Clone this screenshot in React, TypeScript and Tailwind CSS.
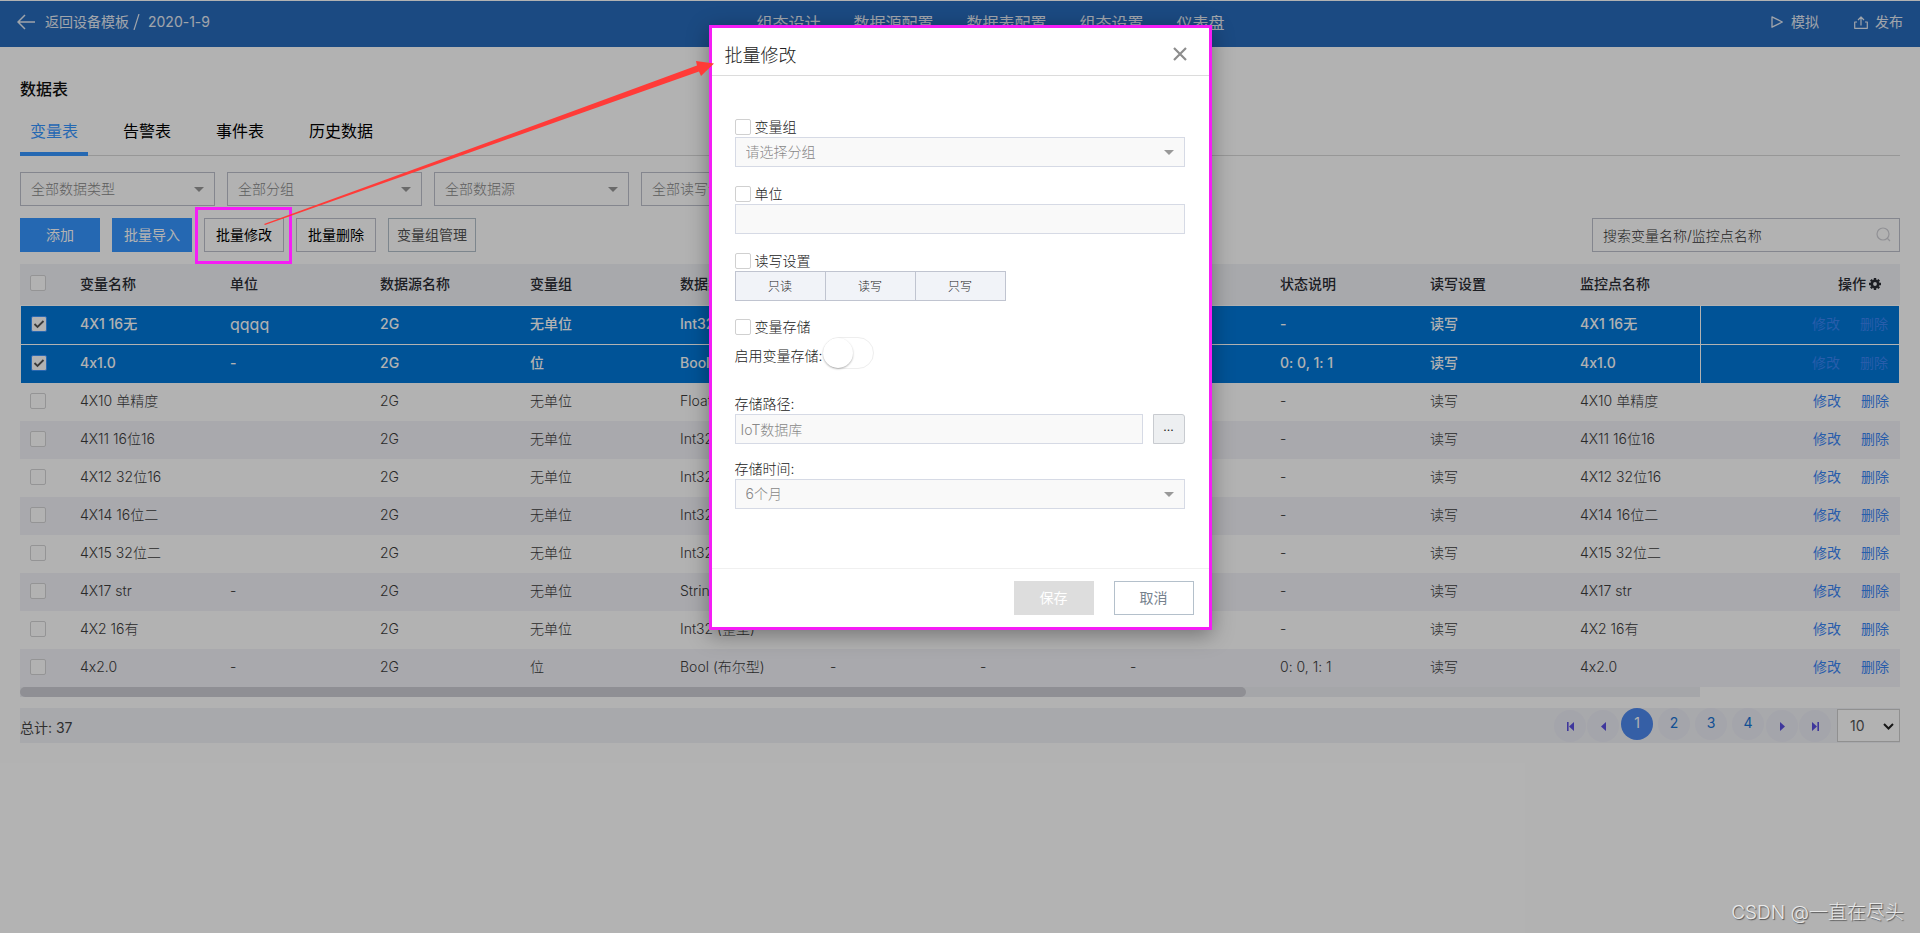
import React, { useState } from 'react';

interface Variable {
    name: string;
    unit: string;
    group: string;
    type: string;
    state: string;
}

const variables: Variable[] = [
    { name: '4X1 16无', unit: 'qqqq', group: '无单位', type: 'Int32 (整型)', state: '-' },
    { name: '4x1.0', unit: '-', group: '位', type: 'Bool (布尔型)', state: '0: 0, 1: 1' },
    { name: '4X10 单精度', unit: '', group: '无单位', type: 'Float (单精度)', state: '-' },
    { name: '4X11 16位16', unit: '', group: '无单位', type: 'Int32 (整型)', state: '-' },
    { name: '4X12 32位16', unit: '', group: '无单位', type: 'Int32 (整型)', state: '-' },
    { name: '4X14 16位二', unit: '', group: '无单位', type: 'Int32 (整型)', state: '-' },
    { name: '4X15 32位二', unit: '', group: '无单位', type: 'Int32 (整型)', state: '-' },
    { name: '4X17 str', unit: '-', group: '无单位', type: 'String (字符串)', state: '-' },
    { name: '4X2 16有', unit: '', group: '无单位', type: 'Int32 (整型)', state: '-' },
    { name: '4x2.0', unit: '-', group: '位', type: 'Bool (布尔型)', state: '0: 0, 1: 1' },
];

const navItems = ['组态设计', '数据源配置', '数据表配置', '组态设置', '仪表盘'];
const tabs = ['变量表', '告警表', '事件表', '历史数据'];
const filters = ['全部数据类型', '全部分组', '全部数据源', '全部读写设置'];
const columns = ['变量名称', '单位', '数据源名称', '变量组', '数据类型', '最小值', '最大值', '小数位', '状态说明', '读写设置'];

const Caret = ({ className }: { className: string }) => (
    <svg className={`pointer-events-none absolute top-1/2 -mt-0.5 h-[5px] w-[10px] ${className}`} viewBox="0 0 10 5">
        <path d="M0 0h10L5 5z" fill="currentColor" />
    </svg>
);

const Tick = ({ checked, onChange, label }: { checked: boolean; onChange: () => void; label: string }) => (
    <span className="relative block h-4 w-4">
        <input
            type="checkbox"
            aria-label={label}
            checked={checked}
            onChange={onChange}
            className="block h-4 w-4 appearance-none rounded-[2px] border border-[#d4d4d6] bg-white checked:border-[#3a96ff]"
        />
        {checked && (
            <svg className="pointer-events-none absolute inset-0 h-4 w-4" viewBox="0 0 16 16" fill="none" stroke="#555" strokeWidth="1.8">
                <path d="M3.5 8l3 3 6-6" />
            </svg>
        )}
    </span>
);

const Header = () => (
    <header className="mt-px flex h-[46px] items-center justify-between bg-[#286aba] pl-[17px] pr-[17px] pb-1 text-sm text-[#e6ecf5]">
        <div className="flex items-center">
            <a href="#back" className="flex items-center">
                <svg className="mr-[10px] h-4 w-[18px]" viewBox="0 0 18 16" fill="none" stroke="currentColor" strokeWidth="1.5">
                    <path d="M8 1L1 8l7 7M1 8h17" />
                </svg>
                返回设备模板
            </a>
            <svg className="ml-1 mr-2 h-4 w-[7px]" viewBox="0 0 7 16" stroke="currentColor" strokeWidth="1.2">
                <path d="M6 0L1 16" />
            </svg>
            <span>2020-1-9</span>
        </div>
        <nav className="flex gap-[33px] pt-0.5 text-base">
            {navItems.map((item) => (
                <a key={item} href="#nav">{item}</a>
            ))}
        </nav>
        <div className="flex gap-[35px]">
            <button className="flex items-center gap-2">
                <svg className="h-3 w-3" viewBox="0 0 12 12" fill="none" stroke="currentColor" strokeWidth="1.3" strokeLinejoin="round">
                    <path d="M1 .8L11.3 6 1 11.2z" />
                </svg>
                模拟
            </button>
            <button className="flex items-center gap-[7px]">
                <svg className="h-[13px] w-[14px]" viewBox="0 0 14 13" fill="none" stroke="currentColor" strokeWidth="1.2" strokeLinejoin="round">
                    <path d="M3 6H.7v6.3h12.6V6H11M7 9.5V1M4 4l3-3 3 3" />
                </svg>
                发布
            </button>
        </div>
    </header>
);

const VariableTable = () => {
    const [selected, setSelected] = useState<number[]>([0, 1]);

    const toggle = (index: number) => {
        setSelected(selected.includes(index) ? selected.filter((i) => i !== index) : [...selected, index]);
    };

    return (
        <>
            <table className="mt-3 w-full table-fixed border-separate border-spacing-0 text-left text-sm">
                <colgroup>
                    <col className="w-[50px]" />
                    {columns.map((c) => (
                        <col key={c} className="w-[150px]" />
                    ))}
                    <col />
                    <col className="w-[200px]" />
                </colgroup>
                <thead>
                    <tr className="h-[41px] bg-[#f1f2f6] text-[#2a2c33]">
                        <th className="pl-[10px] pb-[3px]">
                            <Tick label="全选" checked={false} onChange={() => setSelected([])} />
                        </th>
                        {columns.map((c) => (
                            <th key={c} className="pl-[10px] pb-0.5 font-medium">{c}</th>
                        ))}
                        <th className="pl-[10px] pb-0.5 font-medium">监控点名称</th>
                        <th className="pr-[19px] pb-0.5 font-medium">
                            <span className="flex items-center justify-end gap-[3px]">
                                操作
                                <svg className="h-3 w-3" viewBox="0 0 12 12">
                                    <circle cx="6" cy="6" r="3.2" fill="none" stroke="currentColor" strokeWidth="2.6" />
                                    <path
                                        d="M6 0v2M6 10v2M0 6h2M10 6h2M1.8 1.8l1.4 1.4M8.8 8.8l1.4 1.4M1.8 10.2l1.4-1.4M8.8 3.2l1.4-1.4"
                                        stroke="currentColor"
                                        strokeWidth="2.4"
                                    />
                                </svg>
                            </span>
                        </th>
                    </tr>
                </thead>
                <tbody>
                    {variables.map((v, index) => {
                        const active = selected.includes(index);
                        const cell = active
                            ? 'whitespace-nowrap border-t border-white bg-[#0077d9] pl-[10px] pb-0.5 font-medium text-white'
                            : `whitespace-nowrap pl-[10px] pb-0.5 font-light text-[#3c3c3c] ${index % 2 ? 'bg-[#f2f2f8]' : ''}`;
                        return (
                            <tr key={v.name} className={active ? 'h-[39px]' : 'h-[38px]'}>
                                <td className={`${cell} ${active ? 'border-l' : ''}`}>
                                    <Tick label={v.name} checked={active} onChange={() => toggle(index)} />
                                </td>
                                <td className={cell}>{v.name}</td>
                                <td className={cell}>
                                    <span className={v.unit === 'qqqq' ? 'text-base leading-5 font-normal' : ''}>{v.unit}</span>
                                </td>
                                <td className={cell}>2G</td>
                                <td className={cell}>{v.group}</td>
                                <td className={cell}>{v.type}</td>
                                <td className={cell}>-</td>
                                <td className={cell}>-</td>
                                <td className={cell}>-</td>
                                <td className={cell}>{v.state}</td>
                                <td className={cell}>读写</td>
                                <td className={cell}>{v.name}</td>
                                <td className={`${cell} pr-[11px] text-right ${active ? 'border-x' : ''}`}>
                                    <span className="inline-flex gap-5 font-normal text-[#3a86f5]">
                                        <a href="#edit">修改</a>
                                        <a href="#delete">删除</a>
                                    </span>
                                </td>
                            </tr>
                        );
                    })}
                </tbody>
            </table>
            <div className="mr-[200px] h-[10px] bg-[#edeef3]">
                <div className="h-full w-[73%] rounded-full bg-[#cdcdd4]" />
            </div>
        </>
    );
};

const PageArrow = ({ d, label }: { d: string; label: string }) => (
    <button aria-label={label} className="flex h-8 w-8 items-center justify-center rounded-full bg-[#ebecf5] text-[#5b4fe0]">
        <svg className="h-[9px] w-[9px]" viewBox="0 0 9 9" fill="currentColor">
            <path d={d} />
        </svg>
    </button>
);

const Pagination = () => {
    const [page, setPage] = useState(1);

    return (
        <div className="mt-[11px] flex h-[35px] items-center justify-between bg-[#f1f2f6] text-sm">
            <span className="pt-1 text-[#444]">总计: 37</span>
            <div className="flex h-full items-start">
                <div className="flex gap-px pt-0.5">
                    <PageArrow label="首页" d="M1 0h1.6v9H1zM8 0v9L3 4.5z" />
                    <PageArrow label="上一页" d="M7 0v9L2 4.5z" />
                </div>
                <div className="mx-0.5 flex gap-[5px]">
                    {[1, 2, 3, 4].map((n) => (
                        <button
                            key={n}
                            onClick={() => setPage(n)}
                            className={`h-8 w-8 rounded-full pb-0.5 ${n === page ? 'bg-[#4d88ee] text-white' : 'bg-[#ebecf5] text-[#1873d3]'}`}
                        >
                            {n}
                        </button>
                    ))}
                </div>
                <div className="flex gap-px pt-0.5">
                    <PageArrow label="下一页" d="M2 0v9l5-4.5z" />
                    <PageArrow label="末页" d="M8 0H6.4v9H8zM1 0v9l5-4.5z" />
                </div>
                <div className="relative ml-[6px] mt-px">
                    <select aria-label="每页条数" className="block h-[33px] w-[63px] appearance-none border border-[#cfcfcf] bg-white pl-3 text-[#555]">
                        <option>10</option>
                    </select>
                    <svg className="pointer-events-none absolute right-[6px] top-[14px] h-[7px] w-[11px]" viewBox="0 0 11 7" fill="none" stroke="#222" strokeWidth="2">
                        <path d="M1 1l4.5 4.5L10 1" />
                    </svg>
                </div>
            </div>
        </div>
    );
};

const field = 'block h-[30px] w-full appearance-none rounded-none border border-[#d6dae5] bg-[#f9f9f9] text-[#888]';

const CheckLabel = ({ text }: { text: string }) => (
    <label className="flex h-[18px] items-start gap-1 leading-4">
        <input type="checkbox" className="h-4 w-4 appearance-none rounded-[2px] border border-[#d0d0d0] bg-white" />
        {text}
    </label>
);

const BatchEditDialog = () => (
    <div
        role="dialog"
        aria-label="批量修改"
        className="w-[503px] border-[3px] border-[#f51df5] bg-white text-sm font-light text-[#222] shadow-[0_5px_20px_rgba(0,0,0,0.35)]"
    >
        <div className="flex h-12 items-center justify-between border-b border-[#dcdcdc] pl-[13px] pr-[22px] pt-1">
            <h2 className="pt-1 text-lg">批量修改</h2>
            <button aria-label="关闭" className="text-[#8d8d8d]">
                <svg className="h-[14px] w-[14px]" viewBox="0 0 14 14" fill="none" stroke="currentColor" strokeWidth="2.2">
                    <path d="M1 1l12 12M13 1L1 13" />
                </svg>
            </button>
        </div>

        <div className="pr-6 pt-[43px] pb-[59px] pl-[23px]">
            <CheckLabel text="变量组" />
            <div className="relative">
                <select aria-label="变量组" className={`${field} pl-[10px]`}>
                    <option>请选择分组</option>
                </select>
                <Caret className="right-[11px] text-[#999]" />
            </div>

            <div className="mt-[19px]">
                <CheckLabel text="单位" />
                <input type="text" aria-label="单位" className={`${field} pl-[5px]`} />
            </div>

            <div className="mt-[19px]">
                <CheckLabel text="读写设置" />
                <div className="flex w-[271px] divide-x divide-[#c0c4d0] border border-[#c0c4d0] bg-[#f1f3f8] text-xs">
                    {['只读', '读写', '只写'].map((mode) => (
                        <button key={mode} className="h-7 flex-1 pt-px">{mode}</button>
                    ))}
                </div>
            </div>

            <div className="mt-[18px]">
                <CheckLabel text="变量存储" />
                <label className="flex h-8 items-center gap-px">
                    <span className="pt-1.5">启用变量存储:</span>
                    <span className="relative">
                        <input type="checkbox" className="block h-8 w-[51px] appearance-none rounded-full border border-[#eee] bg-white" />
                        <span className="absolute left-0 top-px h-[30px] w-[30px] rounded-full bg-white shadow-[0_1px_2px_rgba(0,0,0,0.3)]" />
                    </span>
                </label>
            </div>

            <div className="mt-[25px]">
                <label htmlFor="path" className="block leading-5">存储路径:</label>
                <div className="flex gap-[10px]">
                    <input id="path" type="text" defaultValue="IoT数据库" className={`${field} pl-[5px]`} />
                    <button className="h-[30px] w-8 shrink-0 rounded-r-[3px] border border-[#c8cbd0] bg-[#edeff1] pb-1 text-xs leading-4 font-normal">...</button>
                </div>
            </div>

            <div className="mt-[15px]">
                <label htmlFor="time" className="block leading-5">存储时间:</label>
                <div className="relative">
                    <select id="time" className={`${field} pl-[10px]`}>
                        <option>6个月</option>
                    </select>
                    <Caret className="right-[11px] text-[#999]" />
                </div>
            </div>
        </div>

        <div className="flex justify-end gap-5 border-t border-[#f0f0f0] px-[15px] py-3">
            <button disabled className="h-[34px] w-20 bg-[#ddd] font-normal text-white">保存</button>
            <button className="h-[34px] w-20 border border-[#b4c0cb] font-normal text-[#75818d]">取消</button>
        </div>
    </div>
);

const App: React.FC = () => {
    const [tab, setTab] = useState('变量表');

    return (
        <div className="relative min-h-screen overflow-hidden bg-white font-['Inter','Noto_Sans_CJK_SC',sans-serif] [font-feature-settings:'calt'_0]">
            <Header />
            <main className="px-5 pt-[30px]">
                <h1 className="text-base leading-6 font-medium text-[#111]">数据表</h1>

                <div className="mt-[14px] flex h-[41px] gap-[25px] border-b border-[#d8d8d8] text-base">
                    {tabs.map((t) => (
                        <button
                            key={t}
                            onClick={() => setTab(t)}
                            className={`h-[41px] border-b-4 px-[10px] pb-1.5 ${t === tab ? 'border-[#3595ff] text-[#3595ff]' : 'border-transparent text-black'}`}
                        >
                            {t}
                        </button>
                    ))}
                </div>

                <div className="mt-4 flex gap-3">
                    {filters.map((f) => (
                        <div key={f} className="relative w-[195px]">
                            <select aria-label={f} className="block h-[34px] w-full appearance-none border border-[#bec0cc] bg-white pl-[10px] text-sm font-light text-[#888]">
                                <option>{f}</option>
                            </select>
                            <Caret className="right-[11px] text-[#999]" />
                        </div>
                    ))}
                </div>

                <div className="mt-3 flex items-center justify-between text-sm">
                    <div className="flex gap-3">
                        <button className="h-[34px] w-20 bg-[#3595ff] text-white">添加</button>
                        <button className="h-[34px] w-20 bg-[#3595ff] text-white">批量导入</button>
                        <button className="h-[34px] w-20 border border-[#bec0cc] text-black">批量修改</button>
                        <button className="h-[34px] w-20 border border-[#bec0cc] text-black">批量删除</button>
                        <button className="h-[34px] w-[88px] border border-[#b4c0cb] text-[#555]">变量组管理</button>
                    </div>
                    <div className="relative w-[308px]">
                        <input
                            type="text"
                            aria-label="搜索"
                            placeholder="搜索变量名称/监控点名称"
                            className="block h-[34px] w-full border border-[#bec0cc] bg-white pl-[10px] font-light placeholder:text-[#333]"
                        />
                        <svg className="absolute right-[9px] top-[9px] h-[15px] w-[15px]" viewBox="0 0 15 15" fill="none" stroke="#d0d0d6" strokeWidth="1.2">
                            <circle cx="7" cy="7" r="6" />
                            <path d="M11 11l3 3" />
                        </svg>
                    </div>
                </div>

                <VariableTable />
                <Pagination />
            </main>

            {/* Dialog layer */}
            <div className="absolute inset-0 flex items-start justify-center bg-black/30 pt-[25px]">
                <BatchEditDialog />
            </div>

            {/* Annotations */}
            <div className="pointer-events-none absolute left-[195px] top-[207px] h-[57px] w-[97px] border-[3px] border-[#f51df5]" />
            <svg className="pointer-events-none absolute left-[264px] top-[60px] h-[166px] w-[452px]" viewBox="264 60 452 166">
                <path d="M264 224L460 152.5L697 65.5L696 61L714 63.5L701 76L699 71.5L460 156L265 225z" fill="#ff3b38" />
            </svg>
            <div className="pointer-events-none absolute right-4 bottom-1.5 text-[19px] leading-7 font-light text-[#e8e8e8] [text-shadow:1px_1px_1px_#555]">
                CSDN @一直在尽头
            </div>
        </div>
    );
};

export default App;
